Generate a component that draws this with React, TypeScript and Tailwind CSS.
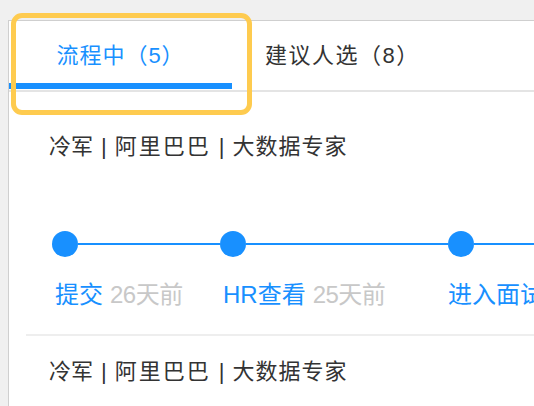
import React from "react";

const FONT = '"Liberation Sans", "Noto Sans CJK SC", sans-serif';

function Name() {
  return (
    <div className="text-[22px] leading-[28px] text-[#333] whitespace-nowrap flex items-center">
      <span>冷军</span>
      <span className="mx-[8px]">|</span>
      <span className="tracking-[2px]">阿里巴巴</span>
      <span className="mx-[8px]">|</span>
      <span className="tracking-[1px]">大数据专家</span>
    </div>
  );
}

function Card({ steps }: { steps: { title: string; time?: string; width?: number }[] }) {
  return (
    <div className="pl-[23px]">
      <Name />
      <div className="mt-[70px] flex pl-[3px]">
        {steps.map((s, i) => (
          <div
            key={i}
            className={s.width ? "flex flex-col shrink-0" : "flex flex-col flex-1 min-w-0"}
            style={s.width ? { width: s.width } : undefined}
          >
            <div className="flex items-center h-[26px]">
              <div className="w-[26px] h-[26px] rounded-full bg-[#1890ff] shrink-0" />
              <div className="flex-1 h-[2px] bg-[#1890ff]" />
            </div>
            <div className={(s.width ? "ml-[3px] " : "ml-0 ") + "mt-[23px] text-[24px] leading-[30px] whitespace-nowrap"}>
              <span className="text-[#1890ff]">{s.title}</span>
              {s.time && <span className="text-[#c8c8c8] ml-[7px] tracking-[-0.5px]">{s.time}</span>}
            </div>
          </div>
        ))}
      </div>
    </div>
  );
}

export default function App() {
  const steps = [
    { title: "提交", time: "26天前", width: 168 },
    { title: "HR查看", time: "25天前", width: 228 },
    { title: "进入面试" },
  ];
  return (
    <div className="w-[534px] h-[406px] bg-[#f0f0f0] overflow-hidden relative" style={{ fontFamily: FONT }}>
      <div className="absolute left-0 top-0 w-full h-full pt-[20px] pl-[8px]">
        <div className="bg-white border-l border-t border-[#cfcfcf] h-full overflow-hidden">
          <div className="flex h-[71px] border-b-2 border-[#e4e4e4] relative">
            <div className="w-[223px] h-full flex items-center justify-center relative shrink-0">
              <span className="text-[22px] text-[#1890ff] tracking-[1px] whitespace-nowrap">流程中（5）</span>
              <div className="absolute left-0 right-0 bottom-[1px] h-[6px] bg-[#1890ff]" />
            </div>
            <div className="h-full flex items-center pl-[33px] shrink-0">
              <span className="text-[22px] text-[#333] tracking-[1.5px] whitespace-nowrap">建议人选（8）</span>
            </div>
          </div>
          <div className="pl-[17px]">
            <div className="pt-[41px]">
              <Card steps={steps} />
            </div>
            <div className="mt-[24px] h-[2px] bg-[#eeeeee]" />
            <div className="pt-[22px]">
              <Card steps={steps} />
            </div>
          </div>
        </div>
      </div>
      <div className="absolute left-[11px] top-[13px] w-[241px] h-[102px] rounded-[11px] border-[5px] border-[#fecb4f]" />
    </div>
  );
}
